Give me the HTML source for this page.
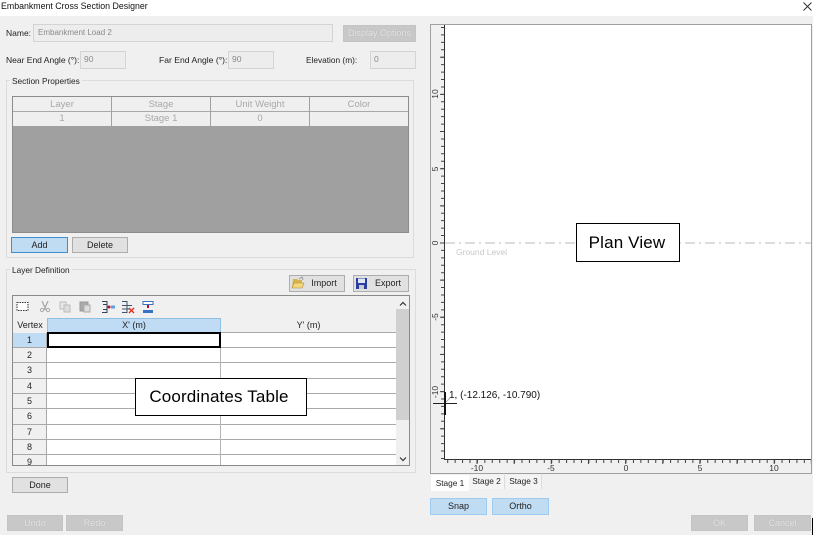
<!DOCTYPE html>
<html><head><meta charset="utf-8">
<style>
html,body{margin:0;padding:0}
body{width:813px;height:535px;overflow:hidden;background:#f0f0f0;position:relative;font-family:"Liberation Sans",sans-serif;font-size:8.5px;color:#222}
div{position:absolute;box-sizing:border-box;white-space:nowrap}
.t{line-height:12px}
.f{background:#ededed;border:1px solid #d4d4d4;color:#8a8a8a;padding:0 0 0 3px;line-height:15px;font-size:8.5px}
.b{background:#e1e1e1;border:1px solid #adadad;text-align:center;line-height:14px;color:#222;font-size:9px}
.d{background:#c8c8c8;border:1px solid #c4c4c4;text-align:center;line-height:15px;color:#e6e6e6;text-shadow:0 0 1px #aaa;font-size:9px}
.bl{background:#c0dcf3;border:1px solid #9dcbf2;text-align:center;line-height:15px;color:#222;font-size:9px}
.g{border:1px solid #dcdcdc}
.c{text-align:center;color:#a8a8a8;line-height:14px;padding-top:1px;border-right:1px solid #a0a0a0;top:0;font-size:9.5px}
.r{left:0;width:34px;background:#f0f0f0;text-align:center;height:15px;line-height:15px;border-bottom:1px solid #a9a9a9;border-right:1px solid #a9a9a9;font-size:9px}
.l{background:#a9a9a9;height:1px;left:34px;width:349px}
.n{box-sizing:border-box;background:#fff;border:1px solid #000;color:#000;font-size:17px;letter-spacing:.15px;text-align:center}
</style></head><body>
<div style="left:0;top:0;width:813px;height:16px;background:#fff"></div>
<div class="t" style="left:1px;top:0;font-size:8.8px;color:#111">Embankment Cross Section Designer</div>
<svg style="position:absolute;left:803px;top:2px" width="9" height="9"><path d="M.5.5l8 8M8.5.5l-8 8" stroke="#333" fill="none"/></svg>

<div class="t" style="left:6px;top:27px">Name:</div>
<div class="f" style="left:33px;top:24px;width:300px;height:18px;font-size:8px;padding-left:4px">Embankment Load 2</div>
<div class="d" style="left:343px;top:25px;width:73px;height:17px">Display Options</div>

<div class="t" style="left:6px;top:54px">Near End Angle (°):</div>
<div class="f" style="left:80px;top:51px;width:46px;height:18px">90</div>
<div class="t" style="left:159px;top:54px;font-size:8.6px">Far End Angle (°):</div>
<div class="f" style="left:228px;top:51px;width:46px;height:18px">90</div>
<div class="t" style="left:306px;top:54px;font-size:8.3px">Elevation (m):</div>
<div class="f" style="left:370px;top:51px;width:46px;height:18px">0</div>

<div class="g" style="left:6px;top:80px;width:408px;height:178px"></div>
<div class="t" style="left:10px;top:75px;background:#f0f0f0;padding:0 2px;font-size:8.3px">Section Properties</div>
<div style="left:12px;top:96px;width:397px;height:137px;background:#a0a0a0;border:1px solid #8c8c8c">
 <div style="left:0;top:0;width:395px;height:29px;background:#efefef"></div>
 <div style="left:0;top:14px;width:395px;height:1px;background:#a8a8a8"></div>
 <div class="c" style="left:0;width:99px;height:29px">Layer<br>1</div>
 <div class="c" style="left:99px;width:99px;height:29px">Stage<br>Stage 1</div>
 <div class="c" style="left:198px;width:99px;height:29px">Unit Weight<br>0</div>
 <div class="c" style="left:297px;width:98px;height:14px;border:0">Color</div>
</div>
<div class="bl" style="left:11px;top:237px;width:57px;height:16px;border-color:#3f8fd0;line-height:14px">Add</div>
<div class="b" style="left:72px;top:237px;width:56px;height:16px">Delete</div>

<div class="g" style="left:6px;top:269px;width:410px;height:204px"></div>
<div class="t" style="left:10px;top:264px;background:#f0f0f0;padding:0 2px;font-size:8.3px">Layer Definition</div>
<div class="b" style="left:289px;top:275px;width:56px;height:17px;padding-left:14px">Import</div>
<svg style="position:absolute;left:291px;top:276px" width="14" height="14"><path d="M2 3h4l1 1h4v3H3L1 12z" fill="#d8b24a"/><path d="M3 7h10l-2 5H1z" fill="#f3d77c" stroke="#b08a30" stroke-width=".6"/><path d="M8 3l3-2 1 3" stroke="#999" fill="none"/></svg>
<div class="b" style="left:353px;top:275px;width:56px;height:17px;padding-left:14px">Export</div>
<svg style="position:absolute;left:355px;top:277px" width="13" height="13"><rect x="1" y="1" width="11" height="11" fill="#2b3f9e"/><rect x="3" y="1.500" width="7" height="4.500" fill="#dfe6f5"/><rect x="4" y="8" width="5" height="4" fill="#c9c9d5"/></svg>

<div style="left:12px;top:295px;width:398px;height:171px;background:#fff;border:1px solid #8a8a8a;overflow:hidden">
 <div style="left:0;top:0;width:383px;height:22px;background:#f0f0f0"></div>
 <svg style="position:absolute;left:0;top:0" width="150" height="22">
  <rect x="4" y="6.500" width="11" height="8" fill="#fff" stroke="#333" stroke-dasharray="1.500 1"/>
  <path d="M29 5l4 9M35 5l-4 9" stroke="#aaa" fill="none" stroke-width="1.300"/><circle cx="29" cy="14" r="1.600" fill="none" stroke="#aaa"/><circle cx="35" cy="14" r="1.600" fill="none" stroke="#aaa"/>
  <rect x="47" y="6" width="6" height="7" fill="#e8e8e8" stroke="#bbb"/><rect x="51" y="9" width="6" height="7" fill="#ddd" stroke="#bbb"/>
  <rect x="67" y="6" width="8" height="9" fill="#aaa" stroke="#999"/><rect x="71" y="9" width="6" height="7" fill="#ddd" stroke="#aaa"/>
  <path d="M89 5.500h5v11h-5M94 8.500h-4M94 13.500h-4" stroke="#345" fill="none"/><circle cx="96" cy="11" r="1.500" fill="#b01030"/><rect x="98" y="9.500" width="4" height="3" fill="#5aa0e0"/>
  <path d="M109 5.500h5v11h-5M109 9.500h10M109 13h8M114 5v12" stroke="#456" fill="none"/><path d="M116 12l5 5M121 12l-5 5" stroke="#e03020" stroke-width="1.400"/>
  <rect x="130" y="5.500" width="10" height="3" fill="#fff" stroke="#3a70c0"/><rect x="130" y="14" width="10" height="3" fill="#3a70c0"/><path d="M135 9v3" stroke="#b01030" stroke-width="2"/>
 </svg>
 <div style="left:0;top:22px;width:34px;height:15px;background:#f0f0f0;text-align:center;line-height:14px;font-size:9px">Vertex</div>
 <div style="left:34px;top:22px;width:174px;height:15px;background:#bfdcf4;border:1px solid #8fbfe3;text-align:center;line-height:13px;font-size:9px">X' (m)</div>
 <div style="left:208px;top:22px;width:175px;height:15px;background:#f0f0f0;text-align:center;line-height:14px;border-bottom:1px solid #a9a9a9;font-size:9px">Y' (m)</div>
 <div class="r" style="top:37px;height:15px;background:#bfdcf4">1</div>
 <div class="r" style="top:52px">2</div>
 <div class="r" style="top:67px;height:16px">3</div>
 <div class="r" style="top:83px">4</div>
 <div class="r" style="top:98px">5</div>
 <div class="r" style="top:113px;height:16px">6</div>
 <div class="r" style="top:129px">7</div>
 <div class="r" style="top:144px">8</div>
 <div class="r" style="top:159px;height:11px;line-height:15px;border-bottom:0">9</div>
 <div class="l" style="top:51px"></div><div class="l" style="top:66px"></div><div class="l" style="top:82px"></div><div class="l" style="top:97px"></div><div class="l" style="top:112px"></div><div class="l" style="top:128px"></div><div class="l" style="top:143px"></div><div class="l" style="top:158px"></div>
 <div style="left:207px;top:37px;width:1px;height:134px;background:#b5b5b5"></div>
 <div style="left:34px;top:36px;width:174px;height:16px;border:2px solid #000;background:#fff"></div>
 <div style="left:383px;top:0;width:13px;height:169px;background:#f0f0f0"></div>
 <div style="left:383px;top:13px;width:13px;height:111px;background:#d0d0d0"></div>
 <svg style="position:absolute;left:386px;top:5px" width="8" height="6"><path d="M1 4.500l3-3 3 3" stroke="#333" stroke-width="1.200" fill="none"/></svg>
 <svg style="position:absolute;left:386px;top:160px" width="8" height="6"><path d="M1 1.500l3 3 3-3" stroke="#333" stroke-width="1.200" fill="none"/></svg>
</div>

<div class="b" style="left:12px;top:477px;width:56px;height:16px">Done</div>
<div class="d" style="left:7px;top:515px;width:56px;height:16px;line-height:14px">Undo</div>
<div class="d" style="left:66px;top:515px;width:57px;height:16px;line-height:14px">Redo</div>
<div class="d" style="left:691px;top:515px;width:57px;height:16px;line-height:14px">OK</div>
<div class="d" style="left:754px;top:515px;width:57px;height:16px;line-height:14px">Cancel</div>
<div style="left:812px;top:518px;width:1px;height:17px;background:#000"></div>

<div style="left:430px;top:24px;width:382px;height:450px;background:#f0f0f0;border:1px solid #a0a0a0"></div>
<div style="left:445px;top:25px;width:366px;height:435px;background:#fff"></div>
<svg style="position:absolute;left:430px;top:24px;overflow:visible" width="382" height="450" viewBox="430 24 382 450">
 <path d="M444.500 25V459.500H811" stroke="#333" fill="none"/>
 <line x1="442.500" x2="442.500" y1="27" y2="459" stroke="#444" stroke-width="3" stroke-dasharray="1 6.430"/>
 <line x1="442" x2="442" y1="56.750" y2="459" stroke="#444" stroke-width="4" stroke-dasharray="1 36.150"/>
 <line x1="447.200" x2="811" y1="461.500" y2="461.500" stroke="#444" stroke-width="3" stroke-dasharray="1 6.430"/>
 <line x1="476.500" x2="811" y1="462" y2="462" stroke="#444" stroke-width="4" stroke-dasharray="1 36.150"/>
 <line x1="445" x2="811" y1="243" y2="243" stroke="#c8c8c8" stroke-width="1.200" stroke-dasharray="10 4 2 4"/>
 <path d="M433 403.500H457" stroke="#222"/>
 <path d="M445 392V415" stroke="#111" stroke-width="2"/>
 <path d="M446 402l4-4" stroke="#aaa"/>
 <g font-family="Liberation Sans" font-size="8.500" fill="#333" text-anchor="middle">
  <text transform="translate(438,94) rotate(-90)">10</text>
  <text transform="translate(438,169) rotate(-90)">5</text>
  <text transform="translate(438,243) rotate(-90)">0</text>
  <text transform="translate(438,317) rotate(-90)">-5</text>
  <text transform="translate(438,392) rotate(-90)">-10</text>
  <text x="477" y="471">-10</text><text x="551" y="471">-5</text><text x="626" y="471">0</text><text x="700" y="471">5</text><text x="774" y="471">10</text>
 </g>
 <text x="456" y="255" font-family="Liberation Sans" font-size="8.500" fill="#c8c8c8">Ground Level</text>
 <text x="449" y="398" font-family="Liberation Sans" font-size="10" fill="#111">1, (-12.126, -10.790)</text>
</svg>

<div style="left:431px;top:475px;width:38px;height:16px;background:#fff;text-align:center;line-height:17px;font-size:8.300px">Stage 1</div>
<div style="left:469px;top:475px;width:36px;height:14px;background:#f4f4f4;border-right:1px solid #ddd;text-align:center;line-height:13px;font-size:8.300px">Stage 2</div>
<div style="left:506px;top:475px;width:36px;height:14px;background:#f4f4f4;border-right:1px solid #ddd;text-align:center;line-height:13px;font-size:8.300px">Stage 3</div>
<div class="bl" style="left:430px;top:498px;width:57px;height:17px">Snap</div>
<div class="bl" style="left:492px;top:498px;width:57px;height:17px">Ortho</div>

<div class="n" style="left:576px;top:223px;width:104px;height:39px;line-height:37px;padding-right:2px">Plan View</div>
<div class="n" style="left:135px;top:378px;width:172px;height:38px;line-height:36px;padding-right:4px">Coordinates Table</div>
</body></html>
